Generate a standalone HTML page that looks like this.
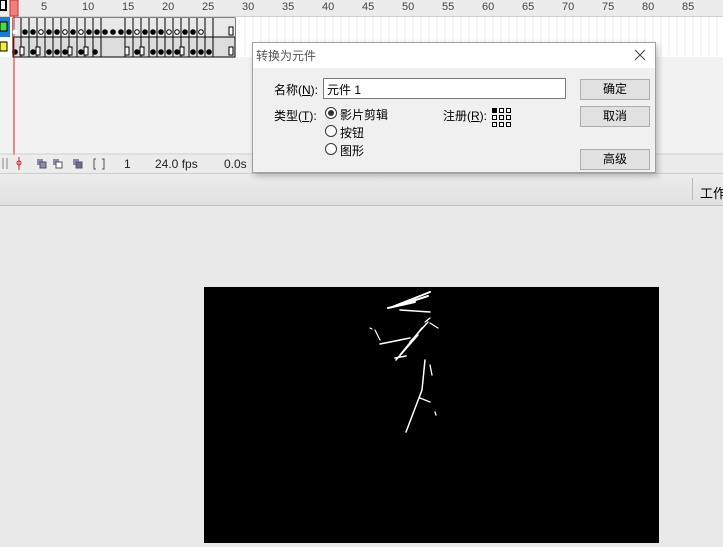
<!DOCTYPE html>
<html><head><meta charset="utf-8"><style>
body{margin:0;width:723px;height:547px;overflow:hidden;background:#e9e9e9;font-family:"Liberation Sans","Noto Sans CJK SC",sans-serif;position:relative}
.abs{position:absolute}
.t{font-size:12px;color:#000;white-space:nowrap}
.btn{position:absolute;left:580px;width:68px;height:19px;border:1px solid #adadad;background:#e1e1e1;font-size:12px;text-align:center;line-height:19px}
</style></head><body>
<div class="abs" style="left:0;top:0;width:723px;height:172px;background:#f2f2f2"></div>
<div class="abs" style="left:0;top:0;width:723px;height:16px;background:#ececec;border-bottom:1px solid #d0d0d0"></div>
<svg class="abs" style="left:0;top:0" width="723" height="172">
<g font-family="Liberation Sans" font-size="11" fill="#444">
<text x="41" y="10">5</text><text x="82" y="10">10</text><text x="122" y="10">15</text><text x="162" y="10">20</text><text x="202" y="10">25</text><text x="242" y="10">30</text><text x="282" y="10">35</text><text x="322" y="10">40</text><text x="362" y="10">45</text><text x="402" y="10">50</text><text x="442" y="10">55</text><text x="482" y="10">60</text><text x="522" y="10">65</text><text x="562" y="10">70</text><text x="602" y="10">75</text><text x="642" y="10">80</text><text x="682" y="10">85</text>
</g>
<rect x="0" y="17" width="723" height="40" fill="#fff"/>
<g stroke="#ececec"><path d="M245 17V57M253 17V57M261 17V57M269 17V57M277 17V57M285 17V57M293 17V57M301 17V57M309 17V57M317 17V57M325 17V57M333 17V57M341 17V57M349 17V57M357 17V57M365 17V57M373 17V57M381 17V57M389 17V57M397 17V57M405 17V57M413 17V57M421 17V57M429 17V57M437 17V57M445 17V57M453 17V57M461 17V57M469 17V57M477 17V57M485 17V57M493 17V57M501 17V57M509 17V57M517 17V57M525 17V57M533 17V57M541 17V57M549 17V57M557 17V57M565 17V57M573 17V57M581 17V57M589 17V57M597 17V57M605 17V57M613 17V57M621 17V57M629 17V57M637 17V57M645 17V57M653 17V57M661 17V57M669 17V57M677 17V57M685 17V57M693 17V57M701 17V57M709 17V57M717 17V57"/></g>
<rect x="0" y="17" width="10" height="20" fill="#1e78d6"/>
<rect x="0" y="22" width="7" height="9" fill="#4ed84e" stroke="#000"/>
<rect x="0" y="42" width="7" height="9" fill="#f0f040" stroke="#000"/>
<rect x="0" y="0" width="6" height="10" fill="#fff" stroke="#000" stroke-width="2"/>
<rect x="13" y="18" width="222" height="39" fill="#dcdcdc" stroke="#000"/>
<rect x="13" y="18" width="222" height="19" fill="#e8e8e8"/>
<line x1="13" y1="37" x2="235" y2="37" stroke="#000"/>
<g stroke="#000"><path d="M21 18V57M29 18V57M37 18V57M45 18V57M53 18V57M61 18V57M69 18V57M77 18V57M85 18V57M93 18V57M101 18V57M125 18V57M133 18V57M141 18V57M149 18V57M157 18V57M165 18V57M173 18V57M181 18V57M189 18V57M197 18V57M205 18V57M213 18V57"/></g>
<g fill="#000" stroke="#000">
<circle cx="25" cy="32" r="2.3"/><circle cx="33" cy="32" r="2.3"/><circle cx="41" cy="32" r="2.3" fill="#fff"/><circle cx="49" cy="32" r="2.3"/><circle cx="57" cy="32" r="2.3"/><circle cx="65" cy="32" r="2.3" fill="#fff"/><circle cx="73" cy="32" r="2.3"/><circle cx="81" cy="32" r="2.3" fill="#fff"/><circle cx="89" cy="32" r="2.3"/><circle cx="97" cy="32" r="2.3"/><circle cx="105" cy="32" r="2.3"/><circle cx="113" cy="32" r="2.3"/><circle cx="121" cy="32" r="2.3"/><circle cx="129" cy="32" r="2.3"/><circle cx="137" cy="32" r="2.3" fill="#fff"/><circle cx="145" cy="32" r="2.3"/><circle cx="153" cy="32" r="2.3"/><circle cx="161" cy="32" r="2.3"/><circle cx="169" cy="32" r="2.3" fill="#fff"/><circle cx="177" cy="32" r="2.3" fill="#fff"/><circle cx="185" cy="32" r="2.3"/><circle cx="193" cy="32" r="2.3"/><circle cx="201" cy="32" r="2.3" fill="#fff"/>
<rect x="229" y="27" width="4" height="8" fill="#fff"/>
<circle cx="15" cy="52" r="2.3"/><rect x="20" y="47" width="4" height="8" fill="#fff"/><circle cx="33" cy="52" r="2.3"/><rect x="36" y="47" width="4" height="8" fill="#fff"/><circle cx="49" cy="52" r="2.3"/><circle cx="57" cy="52" r="2.3"/><circle cx="65" cy="52" r="2.3"/><rect x="68" y="47" width="4" height="8" fill="#fff"/><circle cx="81" cy="52" r="2.3"/><rect x="84" y="47" width="4" height="8" fill="#fff"/><circle cx="95" cy="52" r="2.3"/>
<rect x="125" y="47" width="4" height="8" fill="#fff"/><circle cx="137" cy="52" r="2.3"/><rect x="140" y="47" width="4" height="8" fill="#fff"/><circle cx="153" cy="52" r="2.3"/><circle cx="161" cy="52" r="2.3"/><circle cx="169" cy="52" r="2.3"/><circle cx="177" cy="52" r="2.3"/><rect x="180" y="47" width="4" height="8" fill="#fff"/><circle cx="193" cy="52" r="2.3"/><circle cx="201" cy="52" r="2.3"/><circle cx="209" cy="52" r="2.3"/>
<rect x="229" y="47" width="4" height="8" fill="#fff"/>
</g>
<rect x="10" y="0" width="8" height="16" fill="#f08080" stroke="#d03030"/>
<line x1="14" y1="16" x2="14" y2="172" stroke="#e02020"/>
<circle cx="15" cy="32" r="2.3" fill="#fff"/>
<rect x="0" y="155" width="723" height="17" fill="#ececec"/>
<line x1="0" y1="154" x2="723" y2="154" stroke="#ccc"/>
<g stroke="#888"><line x1="3" y1="158" x2="3" y2="169"/><line x1="7" y1="158" x2="7" y2="169"/></g>
<line x1="19" y1="157" x2="19" y2="170" stroke="#e02020"/><circle cx="19" cy="163" r="2" fill="none" stroke="#e02020"/>
<rect x="37" y="159" width="6" height="6" fill="#8a8ab8"/><rect x="40" y="162" width="6" height="6" fill="#8a8ab8" stroke="#555"/>
<rect x="53" y="159" width="6" height="6" fill="#8a8ab8"/><rect x="56" y="162" width="6" height="6" fill="#fff" stroke="#555"/>
<rect x="73" y="159" width="6" height="6" fill="#8a8ab8"/><rect x="76" y="162" width="6" height="6" fill="#6a6aa0" stroke="#555"/>
<path d="M96 159h-2v10h2M102 159h2v10h-2" fill="none" stroke="#555"/>
<g font-family="Liberation Sans" font-size="12" fill="#222"><text x="124" y="168">1</text><text x="155" y="168">24.0 fps</text><text x="224" y="168">0.0s</text></g>
</svg>
<div class="abs" style="left:0;top:173px;width:723px;height:31px;background:linear-gradient(#ececec,#e0e0e0);border-top:1px solid #cfcfcf;border-bottom:1px solid #bdbdbd"></div>
<div class="abs" style="left:692px;top:178px;width:1px;height:22px;background:#bbb"></div>
<div class="abs t" style="left:700px;top:183px;font-size:13px">工作</div>
<div class="abs" style="left:204px;top:287px;width:455px;height:256px;background:#000"></div>
<svg class="abs" style="left:350px;top:280px" width="120" height="160">
<g stroke="#fff" fill="none" stroke-linecap="round">
<path d="M42 27L80 12M50 25L78 16M38 28L65 22" stroke-width="2"/>
<path d="M50 30L80 32" stroke-width="1.5"/>
<path d="M78 42L60 62M72 48L50 75M68 55L46 80" stroke-width="1.5"/>
<path d="M30 64L60 58M45 78L56 76" stroke-width="1.5"/>
<path d="M25 50L30 60M20 48l2 1" stroke-width="1.2"/>
<path d="M75 80L72 110L56 152" stroke-width="1.5"/>
<path d="M70 118L80 122M85 132L86 135M80 85L82 95" stroke-width="1.3"/>
<path d="M80 43L88 48M75 42L80 38" stroke-width="1.3"/>
</g></svg>
<div class="abs" style="left:252px;top:42px;width:402px;height:129px;background:#f0f0f0;border:1px solid #a0a0a0;box-shadow:2px 3px 6px rgba(0,0,0,.25)"></div>
<div class="abs" style="left:253px;top:43px;width:402px;height:25px;background:#fff"></div>
<div class="abs t" style="left:256px;top:47px;font-size:12px;color:#555">转换为元件</div>
<svg class="abs" style="left:634px;top:49px" width="12" height="12"><path d="M1 1L11 11M11 1L1 11" stroke="#444" stroke-width="1"/></svg>
<div class="abs t" style="left:274px;top:81px">名称(<u>N</u>):</div>
<div class="abs" style="left:323px;top:78px;width:241px;height:19px;background:#fff;border:1px solid #7a7a7a"></div>
<div class="abs t" style="left:327px;top:81px">元件 1</div>
<div class="abs t" style="left:274px;top:107px">类型(<u>T</u>):</div>
<svg class="abs" style="left:324px;top:105px" width="16" height="56"><circle cx="7" cy="8" r="5.5" fill="#fff" stroke="#333"/><circle cx="7" cy="8" r="3" fill="#333"/><circle cx="7" cy="26" r="5.5" fill="#fff" stroke="#333"/><circle cx="7" cy="44" r="5.5" fill="#fff" stroke="#333"/></svg>
<div class="abs t" style="left:340px;top:106px">影片剪辑</div>
<div class="abs t" style="left:340px;top:124px">按钮</div>
<div class="abs t" style="left:340px;top:142px">图形</div>
<div class="abs t" style="left:443px;top:107px">注册(<u>R</u>):</div>
<svg class="abs" style="left:492px;top:108px" width="20" height="20"><g fill="#fff" stroke="#000"><rect x="0.5" y="0.5" width="4" height="4" fill="#000"/><rect x="7.5" y="0.5" width="4" height="4"/><rect x="14.5" y="0.5" width="4" height="4"/><rect x="0.5" y="7.5" width="4" height="4"/><rect x="7.5" y="7.5" width="4" height="4"/><rect x="14.5" y="7.5" width="4" height="4"/><rect x="0.5" y="14.5" width="4" height="4"/><rect x="7.5" y="14.5" width="4" height="4"/><rect x="14.5" y="14.5" width="4" height="4"/></g></svg>
<div class="btn" style="top:79px">确定</div>
<div class="btn" style="top:106px">取消</div>
<div class="btn" style="top:149px">高级</div>
</body></html>
